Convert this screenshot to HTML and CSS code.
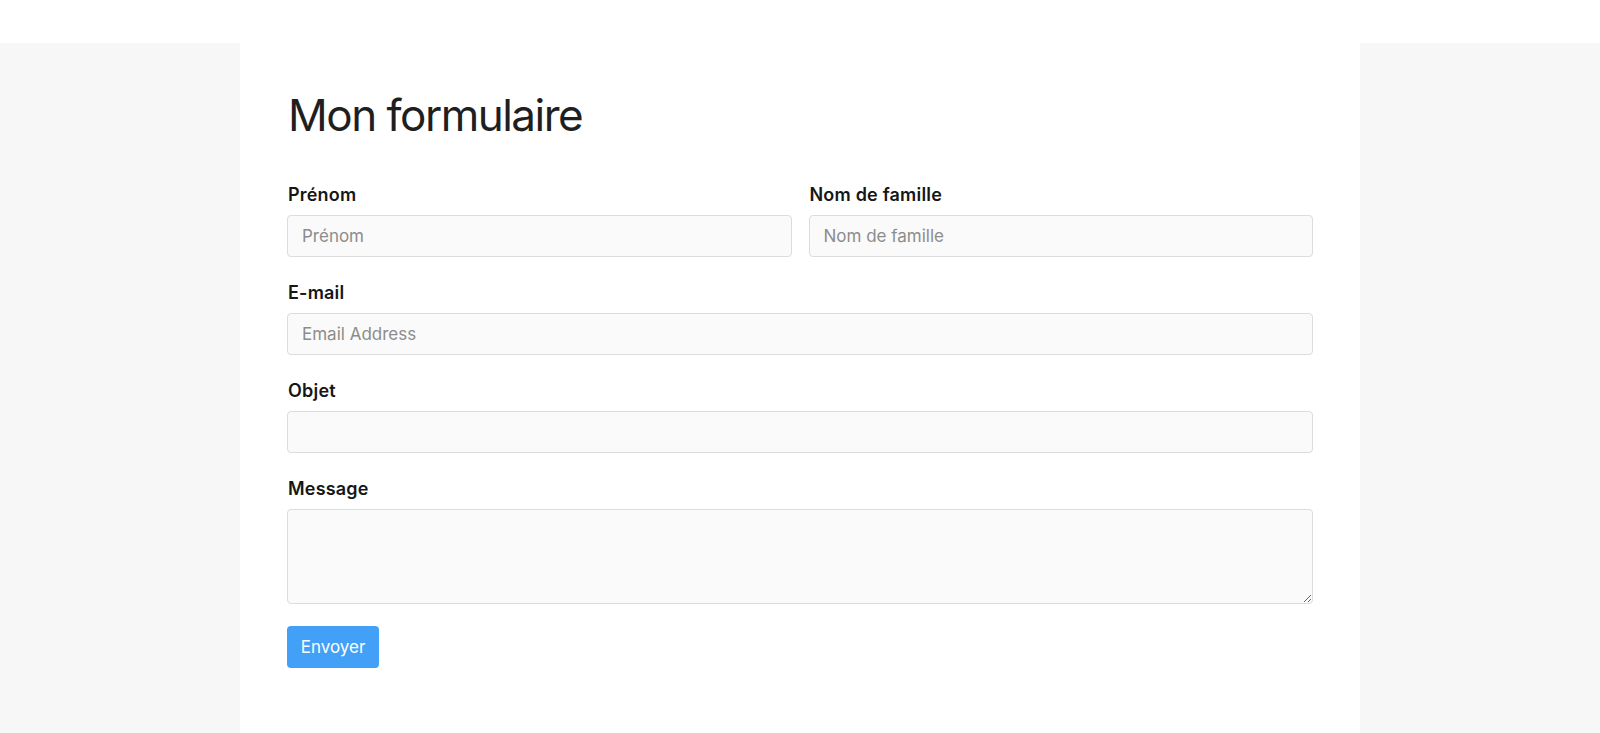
FILE: index.html
```html
<!DOCTYPE html>
<html lang="fr">
<head>
<meta charset="utf-8">
<title>Mon formulaire</title>
<link rel="stylesheet" href="styles.css">
</head>
<body>
<div class="topbar"></div>
<main class="page">
  <section class="panel">
    <h1 class="title">Mon formulaire</h1>
    <form class="form">
      <div class="row">
        <div class="group">
          <label class="label" for="prenom">Prénom</label>
          <input class="input" id="prenom" type="text" placeholder="Prénom">
        </div>
        <div class="group">
          <label class="label" for="nom">Nom de famille</label>
          <input class="input" id="nom" type="text" placeholder="Nom de famille">
        </div>
      </div>
      <div class="group">
        <label class="label" for="email">E-mail</label>
        <input class="input" id="email" type="email" placeholder="Email Address">
      </div>
      <div class="group">
        <label class="label" for="objet">Objet</label>
        <input class="input" id="objet" type="text">
      </div>
      <div class="group last">
        <label class="label" for="message">Message</label>
        <textarea class="input textarea" id="message"></textarea>
      </div>
      <button class="button" type="button">Envoyer</button>
    </form>
  </section>
</main>
</body>
</html>
```
FILE: styles.css
```css
* { box-sizing: border-box; }
html, body { margin: 0; padding: 0; }
body {
  font-family: Inter, "Noto Sans", "Liberation Sans", sans-serif;
  color: #1c1c1c;
  background: #ffffff;
  height: 733px;
  overflow: hidden;
}
.topbar { height: 43px; background: #ffffff; }
.page {
  background: #f7f7f7;
  display: flex;
  justify-content: center;
  min-height: 690px;
}
.panel {
  width: 1120px;
  background: #ffffff;
  padding: 46px 47px 60px 47px;
}
.title {
  margin: 0 0 41px 1px;
  font-size: 44px;
  line-height: 52.8px;
  font-weight: 400;
  color: #1f1f1f;
  letter-spacing: -1.5px;
}
.form { display: flex; flex-direction: column; }
.row {
  display: grid;
  grid-template-columns: 1fr 1fr;
  column-gap: 17px;
}
.group {
  display: flex;
  flex-direction: column;
  margin-bottom: 24px;
}
.label {
  font-size: 18px;
  line-height: 24px;
  font-weight: 600;
  letter-spacing: 0.2px;
  margin: 0 0 8px 1px;
  color: #161616;
}
.input {
  height: 42px;
  border: 1px solid #dcdcdc;
  border-radius: 4px;
  background: #fafafa;
  padding: 0 14px;
  font-family: inherit;
  font-size: 17px;
  color: #333;
}
.input::placeholder { color: #8c8c8c; }
.textarea {
  height: 95px;
  resize: vertical;
  padding: 10px 14px;
}
.group.last { margin-bottom: 22px; }
.button {
  align-self: flex-start;
  width: 92px;
  height: 42px;
  border: none;
  border-radius: 4px;
  background: #42a1f7;
  color: #ffffff;
  font-family: inherit;
  font-size: 17px;
  padding: 0;
}
```
